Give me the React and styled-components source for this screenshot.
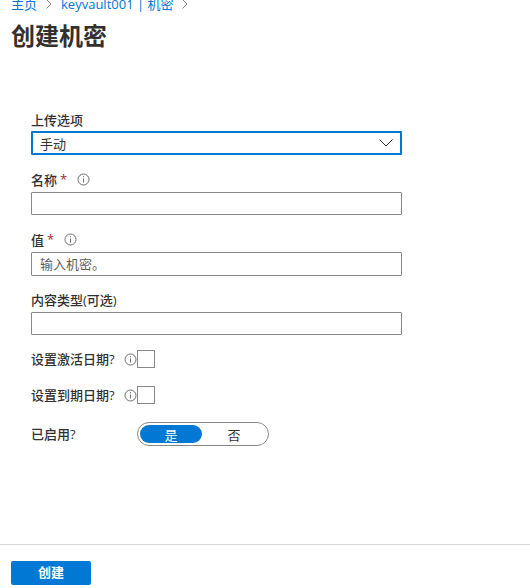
import styled, { createGlobalStyle } from "styled-components";

const GlobalStyle = createGlobalStyle`
  html, body {
    margin: 0;
    padding: 0;
    background: #fff;
    overflow: hidden;
  }
  body {
    font-family: "Open Sans", "Noto Sans CJK SC", sans-serif;
    color: #323130;
  }
`;

const Page = styled.div`
  width: 530px;
  height: 588px;
  display: flex;
  flex-direction: column;
  overflow: hidden;
`;

const Breadcrumb = styled.nav`
  height: 10px;
  margin-top: -1px;
  padding-left: 11px;
  display: flex;
  align-items: center;
  gap: 8px;
  font-size: 13px;
  line-height: 10px;
  color: #0078d4;
`;

const Chevron = () => (
  <svg width="8" height="10" viewBox="0 0 8 10" fill="none" stroke="#8a8886" strokeWidth="1">
    <path d="M1.5 .5 6 5 1.5 9.500" />
  </svg>
);

const Title = styled.h1`
  margin: 11px 0 0 11px;
  font-size: 24px;
  line-height: 32px;
  font-weight: 700;
  color: #323130;
`;

const Form = styled.div`
  flex: 1;
  padding: 55px 0 0 31px;
  display: flex;
  flex-direction: column;
`;

const Field = styled.div`
  display: flex;
  flex-direction: column;
  margin-bottom: ${(p) => p.$gap}px;
`;

const Label = styled.label`
  box-sizing: border-box;
  height: 24px;
  padding-bottom: ${(p) => p.$lift ?? 2}px;
  display: flex;
  align-items: center;
  font-size: 13px;
  font-weight: 500;
  color: #323130;
`;

const Star = styled.span`
  color: #a4262c;
  margin-left: 3px;
`;

const Input = styled.input`
  box-sizing: border-box;
  width: 371px;
  height: ${(p) => p.$h}px;
  border: 1px solid #8a8886;
  border-radius: 1px;
  padding: 0 8px;
  margin: 0;
  outline: none;
  font-family: inherit;
  font-size: 13px;
  &::placeholder {
    color: #605e5c;
    opacity: 1;
  }
`;

const Select = styled.div`
  box-sizing: border-box;
  width: 371px;
  height: 24px;
  border: 2px solid #0078d4;
  border-radius: 1px;
  padding: 0 7px;
  display: flex;
  align-items: center;
  justify-content: space-between;
  font-size: 13px;
  color: #323130;
`;

const InfoWrap = styled.span`
  display: inline-flex;
  margin-left: ${(p) => p.$left}px;
`;

const Info = ({ left }) => (
  <InfoWrap $left={left}>
    <svg width="13" height="13" viewBox="0 0 13 13" fill="none" stroke="#6f6d6b">
      <circle cx="6.500" cy="6.500" r="5.500" />
      <path d="M6.500 5.500v4M6.500 3.200v1.100" />
    </svg>
  </InfoWrap>
);

const CheckRow = styled.div`
  width: 371px;
  height: 18px;
  display: flex;
  align-items: center;
  font-size: 13px;
  font-weight: 500;
  margin-bottom: ${(p) => p.$gap}px;
`;

const CheckLabel = styled.span`
  width: 93px;
  white-space: nowrap;
  padding-bottom: 2px;
`;

const Checkbox = styled.span`
  box-sizing: border-box;
  width: 18px;
  height: 18px;
  border: 1px solid #8a8886;
`;

const ToggleRow = styled.div`
  display: flex;
  align-items: center;
  font-size: 13px;
  font-weight: 500;
`;

const ToggleLabel = styled.span`
  width: 106px;
  padding-bottom: 2px;
`;

const Toggle = styled.div`
  box-sizing: border-box;
  width: 132px;
  height: 24px;
  border: 1px solid #8a8886;
  border-radius: 12px;
  padding: 2px;
  display: flex;
`;

const ToggleOption = styled.span`
  flex: ${(p) => (p.$on ? "0 0 62px" : "1")};
  display: flex;
  align-items: center;
  justify-content: center;
  border-radius: 9px;
  font-size: 13px;
  font-weight: 400;
  background: ${(p) => (p.$on ? "#0078d4" : "transparent")};
  color: ${(p) => (p.$on ? "#fff" : "#323130")};
`;

const Footer = styled.div`
  box-sizing: border-box;
  height: 44px;
  border-top: 1px solid #d6d6d6;
  padding: 16px 0 0 11px;
`;

const Primary = styled.button`
  display: block;
  width: 80px;
  height: 24px;
  border: 0;
  border-radius: 2px;
  background: #0078d4;
  color: #fff;
  font-family: inherit;
  font-size: 13px;
  font-weight: 700;
  padding: 0 0 3px;
`;

export default function App() {
  return (
    <Page>
      <GlobalStyle />
      <Breadcrumb>
        <span>主页</span>
        <Chevron />
        <span>keyvault001 | 机密</span>
        <Chevron />
      </Breadcrumb>
      <Title>创建机密</Title>
      <Form>
        <Field $gap={13}>
          <Label $lift={0}>上传选项</Label>
          <Select>
            <span>手动</span>
            <svg width="14" height="8" viewBox="0 0 14 8" fill="none" stroke="#323130">
              <path d="M.5 .5 7 7l6.500-6.500" />
            </svg>
          </Select>
        </Field>
        <Field $gap={13}>
          <Label>
            名称<Star>*</Star>
            <Info left={10} />
          </Label>
          <Input $h={23} />
        </Field>
        <Field $gap={12}>
          <Label>
            值<Star>*</Star>
            <Info left={10} />
          </Label>
          <Input $h={24} placeholder="输入机密。" />
        </Field>
        <Field $gap={15}>
          <Label $lift={1}>内容类型(可选)</Label>
          <Input $h={23} />
        </Field>
        <CheckRow $gap={18}>
          <CheckLabel>设置激活日期?</CheckLabel>
          <Info left={0} />
          <Checkbox />
        </CheckRow>
        <CheckRow $gap={18}>
          <CheckLabel>设置到期日期?</CheckLabel>
          <Info left={0} />
          <Checkbox />
        </CheckRow>
        <ToggleRow>
          <ToggleLabel>已启用?</ToggleLabel>
          <Toggle>
            <ToggleOption $on>是</ToggleOption>
            <ToggleOption>否</ToggleOption>
          </Toggle>
        </ToggleRow>
      </Form>
      <Footer>
        <Primary>创建</Primary>
      </Footer>
    </Page>
  );
}
